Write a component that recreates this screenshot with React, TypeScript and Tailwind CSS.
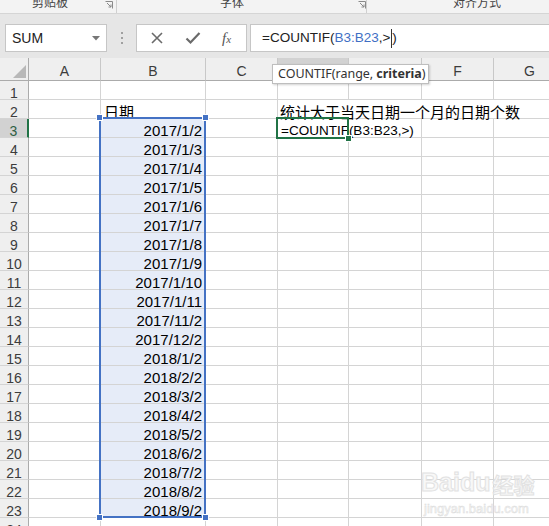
import React from "react";

const COLS = ["A", "B", "C", "D", "E", "F", "G"];

const DATES: Record<number, string> = {
  3: "2017/1/2",
  4: "2017/1/3",
  5: "2017/1/4",
  6: "2017/1/5",
  7: "2017/1/6",
  8: "2017/1/7",
  9: "2017/1/8",
  10: "2017/1/9",
  11: "2017/1/10",
  12: "2017/1/11",
  13: "2017/11/2",
  14: "2017/12/2",
  15: "2018/1/2",
  16: "2018/2/2",
  17: "2018/3/2",
  18: "2018/4/2",
  19: "2018/5/2",
  20: "2018/6/2",
  21: "2018/7/2",
  22: "2018/8/2",
  23: "2018/9/2",
};

const base =
  "h-[19px] border-r border-b border-[#d4d4d4] flex items-end whitespace-nowrap overflow-visible leading-[12px] text-black";
const cell = base + " text-[15px]";

function Launcher() {
  return (
    <svg width="8" height="8" viewBox="0 0 8 8" className="block">
      <path d="M0.5 0.5 H7.5 V7.5" fill="none" stroke="#8a8a8a" strokeWidth="1" />
      <path d="M2 2 L6 6 M6 3.5 V6 H3.5" fill="none" stroke="#8a8a8a" strokeWidth="1" />
    </svg>
  );
}

function Row({ r }: { r: number }) {
  const selRow = r === 3;
  const header = (
    <div
      className={
        "h-[19px] border-b border-[#d4d4d4] flex items-end justify-center text-[14px] leading-[12px] " +
        (selRow
          ? "bg-[#d2d2d2] text-[#2f5f45] border-r-2 border-r-[#217346]"
          : "bg-[#efefef] text-[#3c3c3c] border-r border-r-[#ababab]")
      }
    >
      {r}
    </div>
  );
  const inSel = r >= 3 && r <= 23;
  const bCell = (
    <div className={cell + (inSel ? " bg-[#e6ecf8] justify-end pr-[3px]" : " pl-[3px]")}>
      {r === 2 ? (
        <span className="font-['Noto_Sans_CJK_SC',sans-serif] leading-[12px]">日期</span>
      ) : (
        DATES[r] ?? ""
      )}
    </div>
  );
  let rest: React.ReactNode;
  if (r === 2) {
    rest = (
      <div className={cell + " col-span-4 pl-[2px]"}>
        <span className="font-['Noto_Sans_CJK_SC',sans-serif] leading-[12px]">
          统计大于当天日期一个月的日期个数
        </span>
      </div>
    );
  } else if (r === 3) {
    rest = (
      <>
        <div className={base + " text-[13.5px] col-span-2 pl-[3px]"}>=COUNTIF(B3:B23,&gt;)</div>
        <div className={cell} />
        <div className={cell} />
      </>
    );
  } else {
    rest = (
      <>
        <div className={cell} />
        <div className={cell} />
        <div className={cell} />
        <div className={cell} />
      </>
    );
  }
  return (
    <>
      {header}
      <div className={cell} />
      {bCell}
      <div className={cell} />
      {rest}
    </>
  );
}

export default function App() {
  const rows = Array.from({ length: 24 }, (_, i) => i + 1);
  return (
    <div className="relative w-[549px] h-[526px] overflow-hidden bg-white font-['Liberation_Sans','Noto_Sans_CJK_SC',sans-serif]">
      {/* Ribbon remnant */}
      <div className="h-[14px] bg-[#f3f3f3] border-b border-[#d5d5d5] overflow-hidden flex items-start text-[12px] leading-[12px] text-[#444] font-['Noto_Sans_CJK_SC',sans-serif]">
        <div className="w-[117px] h-[13px] flex items-start border-r border-[#d0d0d0]">
          <span className="ml-[32px] mt-[-4px]">剪贴板</span>
          <span className="ml-[37px] mt-[1px]">
            <Launcher />
          </span>
        </div>
        <div className="w-[250px] h-[13px] flex items-start border-r border-[#d0d0d0]">
          <span className="ml-[103px] mt-[-4px]">字体</span>
          <span className="ml-[114px] mt-[1px]">
            <Launcher />
          </span>
        </div>
        <span className="ml-[86px] mt-[-4px]">对齐方式</span>
      </div>

      {/* Formula bar */}
      <div className="h-[44px] bg-[#e6e6e6] flex items-start pt-[10px]">
        <div className="ml-[5px] w-[102px] h-[28px] bg-white border border-[#c6c6c6] flex items-center justify-between pl-[6px] pr-[6px] text-[14px] text-[#222]">
          <span>SUM</span>
          <svg width="8" height="5" viewBox="0 0 8 5">
            <path d="M0 0 H8 L4 4.5 Z" fill="#777" />
          </svg>
        </div>
        <div className="ml-[14px] h-[28px] flex flex-col justify-center gap-[3px]">
          <span className="block w-[2px] h-[2px] bg-[#a0a0a0]" />
          <span className="block w-[2px] h-[2px] bg-[#a0a0a0]" />
          <span className="block w-[2px] h-[2px] bg-[#a0a0a0]" />
        </div>
        <div className="ml-[13px] w-[111px] h-[28px] bg-white border border-[#c6c6c6] flex items-center">
          <svg width="14" height="14" viewBox="0 0 14 14" className="ml-[13px]">
            <path d="M2 2 L12 12 M12 2 L2 12" stroke="#6a6a6a" strokeWidth="1.6" />
          </svg>
          <svg width="16" height="14" viewBox="0 0 16 14" className="ml-[21px]">
            <path d="M1.5 7.5 L5.5 11.5 L14.5 2" fill="none" stroke="#6a6a6a" strokeWidth="2.2" />
          </svg>
          <span className="ml-[21px] font-['Liberation_Serif',serif] italic text-[15px] text-[#555] leading-none">
            f<span className="text-[11px]">x</span>
          </span>
        </div>
        <div className="ml-[3px] flex-1 h-[28px] bg-white border border-[#c6c6c6] border-r-0 flex items-center pl-[11px] text-[13.5px] text-[#222] whitespace-nowrap">
          <span>=COUNTIF(</span>
          <span className="text-[#3f6fc4]">B3:B23</span>
          <span>,&gt;</span>
          <span className="inline-block w-[1px] h-[19px] bg-[#333] mx-[0.5px]" />
          <span>)</span>
        </div>
      </div>

      {/* Grid */}
      <div className="relative">
        <div className="grid grid-cols-[29px_72px_105px_72px_71px_73px_72px_72px] w-[566px]">
          {/* header row */}
          <div className="h-[23px] bg-[#efefef] border-r border-b border-[#ababab] flex items-end justify-end pr-[2px] pb-[2px]">
            <svg width="13" height="13" viewBox="0 0 13 13">
              <path d="M13 0 V13 H0 Z" fill="#b8b8b8" />
            </svg>
          </div>
          {COLS.map((c) => (
            <div
              key={c}
              className={
                "h-[23px] border-r border-r-[#c8c8c8] border-b border-b-[#ababab] flex items-center justify-center pt-[5px] text-[14px] text-[#3c3c3c] " +
                (c === "D" ? "bg-[#d2d2d2]" : "bg-[#efefef]")
              }
            >
              {c === "D" || c === "E" ? "" : c}
            </div>
          ))}
          {rows.map((r) => (
            <Row key={r} r={r} />
          ))}
        </div>

        {/* Range selection B3:B23 */}
        <div className="absolute left-[99px] top-[59px] w-[107px] h-[401px] border-2 border-[#4472c4] pointer-events-none" />
        <div className="absolute left-[96px] top-[56px] w-[7px] h-[7px] bg-[#4472c4] border border-white" />
        <div className="absolute left-[202px] top-[56px] w-[7px] h-[7px] bg-[#4472c4] border border-white" />
        <div className="absolute left-[96px] top-[456px] w-[7px] h-[7px] bg-[#4472c4] border border-white" />
        <div className="absolute left-[202px] top-[456px] w-[7px] h-[7px] bg-[#4472c4] border border-white" />

        {/* Active cell D3 */}
        <div className="absolute left-[276px] top-[59px] w-[73px] h-[22px] border-2 border-[#217346] pointer-events-none" />
        <div className="absolute left-[345px] top-[77px] w-[7px] h-[7px] bg-[#217346] border border-white" />

        {/* Tooltip */}
        <div className="absolute left-[272px] top-[6px] w-[157px] h-[20px] bg-white border border-[#bebebe] shadow-[1px_1px_2px_rgba(0,0,0,0.18)] flex items-center pl-[5px] text-[12.5px] text-[#333] whitespace-nowrap font-['Noto_Sans',sans-serif]">
          <span>COUNTIF(range,</span>
          <span className="font-bold ml-[3px]">criteria</span>
          <span>)</span>
        </div>
      </div>

      {/* Watermark */}
      <div className="absolute left-[421px] top-[470px] flex flex-col items-start pointer-events-none text-[#f8f8f8] [-webkit-text-stroke:1px_#e2e2e2] whitespace-nowrap">
        <div className="flex items-end leading-none">
          <span className="font-bold text-[25px]">Bai</span>
          <span className="font-bold text-[25px]">du</span>
          <span className="font-bold text-[21px] ml-[2px] font-['Noto_Sans_CJK_SC',sans-serif]">经验</span>
        </div>
        <span className="text-[13px] leading-none mt-[7px] ml-[3px] [-webkit-text-stroke:0.5px_#dcdcdc]">
          jingyan.baidu.com
        </span>
      </div>
    </div>
  );
}
